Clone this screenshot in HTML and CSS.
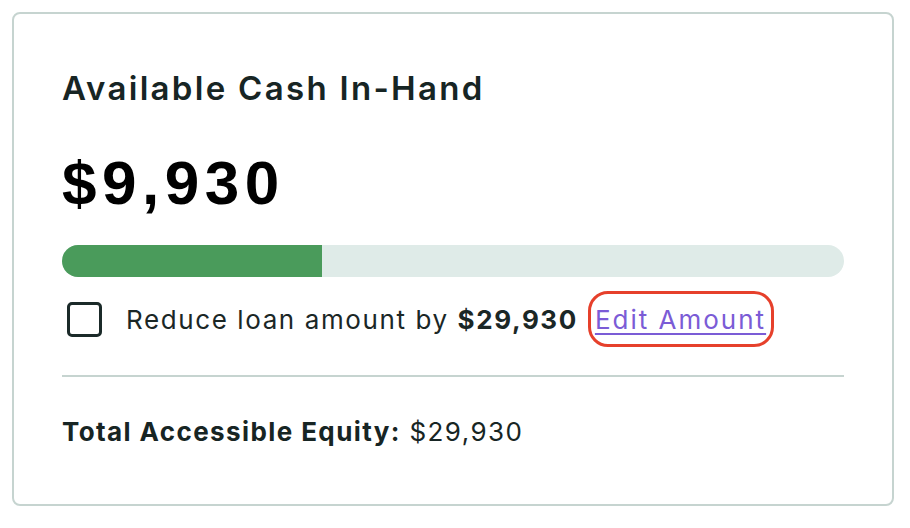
FILE: index.html
```html
<!DOCTYPE html>
<html lang="en">
  <head>
    <meta charset="UTF-8" />
    <meta name="viewport" content="width=device-width, initial-scale=1.0" />
    <title>Cash In-Hand</title>
    <link rel="stylesheet" href="styles.css">
  </head>
  <body>
    <div class="card">
      <h2 class="card-title">Available Cash In-Hand</h2>
      <div class="amount">$9,930</div>

      <div class="progress">
        <div class="progress-fill" style="width: 33.2%"></div>
      </div>

      <div class="reduce-row">
        <span class="checkbox"></span>
        <span class="reduce-text">Reduce loan amount by <b>$29,930</b></span>
        <span class="highlight"><a href="#" class="edit-link">Edit Amount</a></span>
      </div>

      <hr class="divider" />

      <p class="total"><b>Total Accessible Equity:</b> $29,930</p>
    </div>
  </body>
</html>
```

FILE: styles.css
```css
* {
  margin: 0;
  padding: 0;
  box-sizing: border-box;
}
body {
  font-family: Inter, "Noto Sans", sans-serif;
  background-color: #ffffff;
  color: #172524;
  padding: 12px 16px 0 12px;
}
.card {
  height: 494px;
  border: 2px solid #c6d4d0;
  border-radius: 8px;
  padding: 56px 48px 0 48px;
}
.card-title {
  font-size: 33px;
  font-weight: 600;
  line-height: 36px;
  letter-spacing: 2.3px;
}
.amount {
  font-family: "Liberation Sans", Arial, sans-serif;
  font-weight: bold;
  font-size: 62px;
  line-height: 62px;
  letter-spacing: 5.5px;
  color: #000;
  margin-top: 46px;
}
.progress {
  margin-top: 31px;
  height: 32px;
  border-radius: 16px;
  background-color: #dfebe8;
  overflow: hidden;
}
.progress-fill {
  height: 100%;
  background-color: #4a9b5b;
}
.reduce-row {
  margin-top: 14px;
  display: flex;
  align-items: center;
  height: 56px;
  font-size: 26px;
  letter-spacing: 1.6px;
  color: #1b2726;
}
.checkbox {
  flex-shrink: 0;
  width: 35px;
  height: 35px;
  margin-left: 5px;
  margin-right: 24px;
  border: 3.5px solid #1b2a29;
  border-radius: 5px;
}
.reduce-text b {
  font-weight: 700;
}
.highlight {
  margin-left: 10px;
  height: 56px;
  display: flex;
  align-items: center;
  padding: 0 5px 0 4px;
  border: 3.5px solid #e6402b;
  border-radius: 20px;
}
.edit-link {
  color: #7b5cd6;
  letter-spacing: 2px;
  text-decoration: underline;
  text-underline-offset: 4px;
  text-decoration-thickness: 2px;
}
.divider {
  margin-top: 28px;
  border: none;
  height: 2px;
  background-color: #c6d4d0;
}
.total {
  margin-top: 40px;
  font-size: 26px;
  line-height: 30px;
  letter-spacing: 1.4px;
}
.total b {
  font-weight: 700;
}
```
